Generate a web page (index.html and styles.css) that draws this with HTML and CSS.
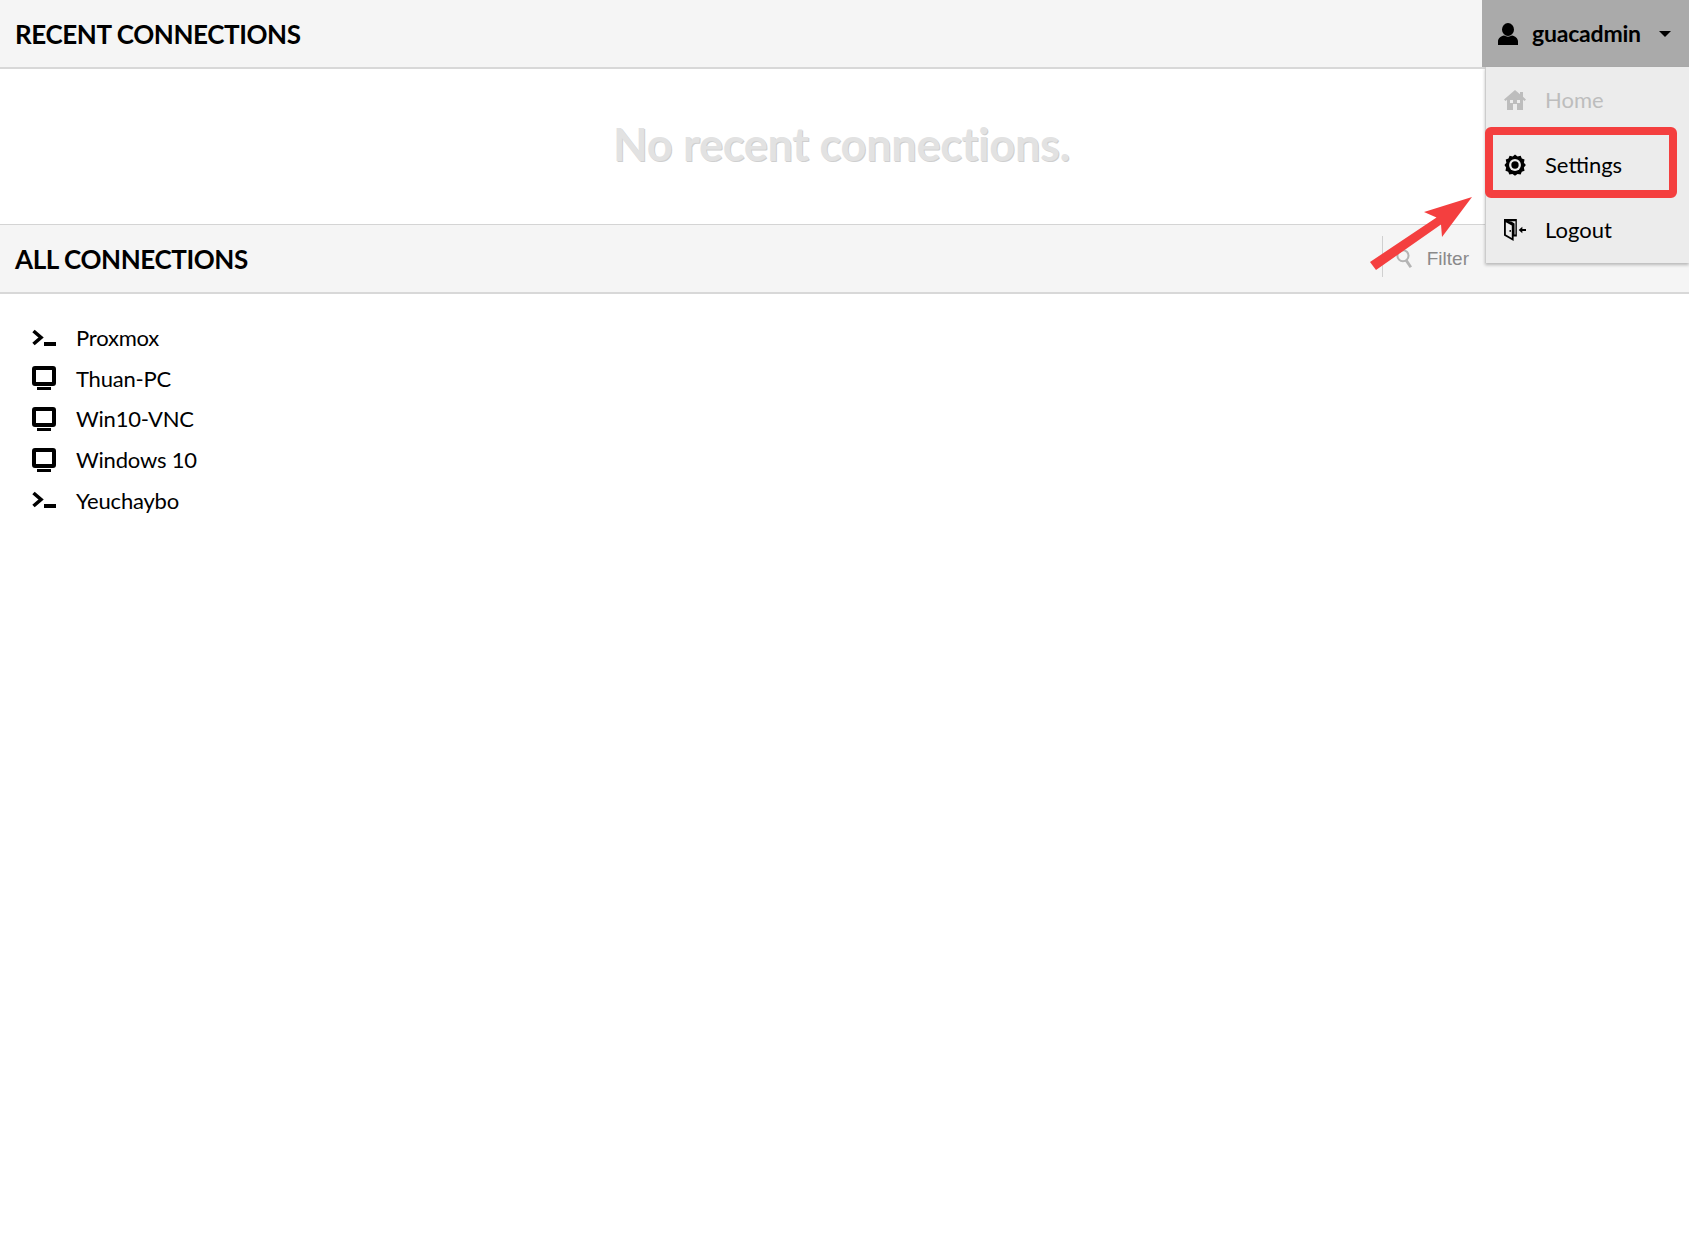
FILE: index.html
```html
<!DOCTYPE html>
<html lang="en">
<head>
<meta charset="utf-8">
<title>Guacamole Home</title>
<link rel="stylesheet" href="styles.css">
</head>
<body>
<main class="page">
  <header class="bar bar-recent"><h2 class="bar-title">RECENT CONNECTIONS</h2></header>
  <section class="recent"><p class="placeholder">No recent connections.</p></section>
  <header class="bar bar-all">
    <h2 class="bar-title">ALL CONNECTIONS</h2>
    <div class="filter">
      <svg class="filter-icon" viewBox="0 0 17 21"><circle cx="7.500" cy="7.500" r="6" fill="none" stroke="#b4b4b4" stroke-width="2.200"/><path d="M11 12.500 16 20" stroke="#b4b4b4" stroke-width="3" fill="none"/></svg>
      <span class="filter-text">Filter</span>
    </div>
  </header>
  <ul class="conn-list">
    <li class="conn"><svg class="conn-icon" viewBox="0 0 24 24"><path d="M1.500 5 9 11.500 1.500 18" fill="none" stroke="#000" stroke-width="3.600"/><rect x="12" y="16" width="12" height="4"/></svg><span>Proxmox</span></li>
    <li class="conn"><svg class="conn-icon" viewBox="0 0 24 24"><rect x="2" y="2" width="20" height="16" rx="1" fill="none" stroke="#000" stroke-width="4"/><rect x="5" y="21" width="14" height="3"/></svg><span>Thuan-PC</span></li>
    <li class="conn"><svg class="conn-icon" viewBox="0 0 24 24"><rect x="2" y="2" width="20" height="16" rx="1" fill="none" stroke="#000" stroke-width="4"/><rect x="5" y="21" width="14" height="3"/></svg><span>Win10-VNC</span></li>
    <li class="conn"><svg class="conn-icon" viewBox="0 0 24 24"><rect x="2" y="2" width="20" height="16" rx="1" fill="none" stroke="#000" stroke-width="4"/><rect x="5" y="21" width="14" height="3"/></svg><span>Windows 10</span></li>
    <li class="conn"><svg class="conn-icon" viewBox="0 0 24 24"><path d="M1.500 5 9 11.500 1.500 18" fill="none" stroke="#000" stroke-width="3.600"/><rect x="12" y="16" width="12" height="4"/></svg><span>Yeuchaybo</span></li>
  </ul>
</main>

<aside class="user-menu">
  <div class="user-button">
    <svg class="user-icon" viewBox="0 0 20 22"><ellipse cx="10" cy="6.500" rx="6" ry="6.500"/><path d="M0 22v-3.500C0 15 3 13 6 12.500c2.500 1.500 5.500 1.500 8 0 3 .5 6 2.500 6 6V22z"/></svg>
    <span class="user-name">guacadmin</span>
    <span class="caret"></span>
  </div>
  <ul class="menu">
    <li class="menu-item is-disabled">
      <svg class="menu-icon" viewBox="0 0 22 20"><path fill="#bdbdbd" fill-rule="evenodd" d="M11 0 0 9.500 1.500 11 3 9.800V20h6v-6h4v6h6V9.800l1.500 1.200L22 9.500 19 6.800V2h-3v2.200zM6 10h3v3H6zM13 10h3v3h-3z"/></svg>
      <span>Home</span>
    </li>
    <li class="menu-item">
      <svg class="menu-icon" viewBox="0 0 24 24"><path d="M12 .5l2.800 2.100 3.400-.7 1.200 3 3 1.200-.7 3.400 2.100 2.500-2.100 2.800.7 3.400-3 1.200-1.200 3-3.400-.7-2.800 2.100-2.800-2.100-3.400.7-1.200-3-3-1.200.7-3.400L.5 12l2.100-2.500-.7-3.400 3-1.200 1.200-3 3.400.7z"/><circle cx="12" cy="12" r="6.500" fill="#ececec"/><circle cx="12" cy="12" r="4"/></svg>
      <span>Settings</span>
    </li>
    <li class="menu-item">
      <svg class="menu-icon menu-icon-door" viewBox="0 0 24 24"><path fill-rule="evenodd" d="M0 0h14v19h-3.500v5L0 18zM2 3.500V17l6.500 3.800V7.200z M8.500 3 11.500 5V17h1V2.500H5z"/><circle cx="6.800" cy="13" r="1"/><path d="M16 12l4-3.500V11h4v2h-4v2.500z"/></svg>
      <span>Logout</span>
    </li>
  </ul>
</aside>

<div class="highlight"></div>
<svg class="arrow" viewBox="0 0 103 73"><path fill="#f43f3f" d="M102 0 72 40 71 27.500 6 73 0 65 66.500 20.500 54 15Z"/></svg>
</body>
</html>
```
FILE: styles.css
```css
* { box-sizing: border-box; }
html, body { margin: 0; padding: 0; background: #fff; }
body {
  font-family: Lato, "Liberation Sans", sans-serif;
  color: #000;
  height: 1260px;
  overflow: hidden;
  position: relative;
}
ul { list-style: none; margin: 0; padding: 0; }

.bar {
  display: flex;
  align-items: center;
  justify-content: space-between;
  background: #f5f5f5;
  height: 69px;
  padding-left: 15px;
  border-bottom: 2px solid #d8d8d8;
}
.bar-all { height: 70px; border-top: 1px solid #d4d4d4; padding-right: 220px; }
.bar-title {
  margin: 0;
  font-size: 26px;
  font-weight: 700;
  line-height: 1;
  letter-spacing: -0.4px;
}
.recent { height: 155px; display: flex; align-items: center; justify-content: center; }
.placeholder {
  margin: 0 0 6px;
  font-size: 45px;
  font-weight: 700;
  letter-spacing: -0.25px;
  color: #e2e2e2;
  text-shadow: 1px 1px 0 #cfcfcf;
  position: relative;
  left: -3px;
}

.filter {
  display: flex;
  align-items: center;
  height: 41px;
  width: 87px;
  border-left: 1px solid #d0d0d0;
  margin-top: -4px;
}
.filter-icon { width: 17px; height: 21px; margin-left: 13px; margin-right: 15px; margin-top: 4px; }
.filter-text { font-family: "Liberation Sans", sans-serif; font-size: 19px; color: #8a8a8a; margin-top: 4px; }

.conn-list { padding: 23.500px 32px; }
.conn {
  display: flex;
  align-items: center;
  height: 40.600px;
  font-size: 22px;
  letter-spacing: -0.2px;
}
.conn-icon { width: 24px; height: 24px; margin-right: 20px; flex: none; }

.user-menu { position: absolute; top: 0; right: 0; width: 207px; }
.user-button {
  display: flex;
  align-items: center;
  height: 67px;
  background: #aaa;
  padding-left: 16px;
}
.user-icon { width: 20px; height: 22px; margin-right: 14px; }
.user-name { font-size: 23px; font-weight: 700; letter-spacing: -0.2px; margin-bottom: 2px; }
.caret {
  width: 0;
  height: 0;
  margin-left: 18px;
  margin-top: 1px;
  border-left: 6px solid transparent;
  border-right: 6px solid transparent;
  border-top: 6px solid #000;
}
.menu {
  margin-left: 3px;
  background: #ececec;
  border-left: 1px solid #ccc;
  padding: 0;
  height: 196px;
  box-shadow: 0 2px 3px rgba(0,0,0,.25);
}
.menu-item {
  display: flex;
  align-items: center;
  height: 65px;
  padding-left: 18px;
  font-size: 22px;
}
.menu-item.is-disabled { color: #bdbdbd; }
.menu-icon { width: 22px; height: 22px; margin-right: 19px; flex: none; }
.menu-icon-door { height: 24px; }

.highlight {
  position: absolute;
  left: 1485px;
  top: 127px;
  width: 192px;
  height: 71px;
  border: 8px solid #f43f3f;
  border-radius: 6px;
}
.arrow {
  position: absolute;
  left: 1370px;
  top: 197px;
  width: 103px;
  height: 73px;
}
```
